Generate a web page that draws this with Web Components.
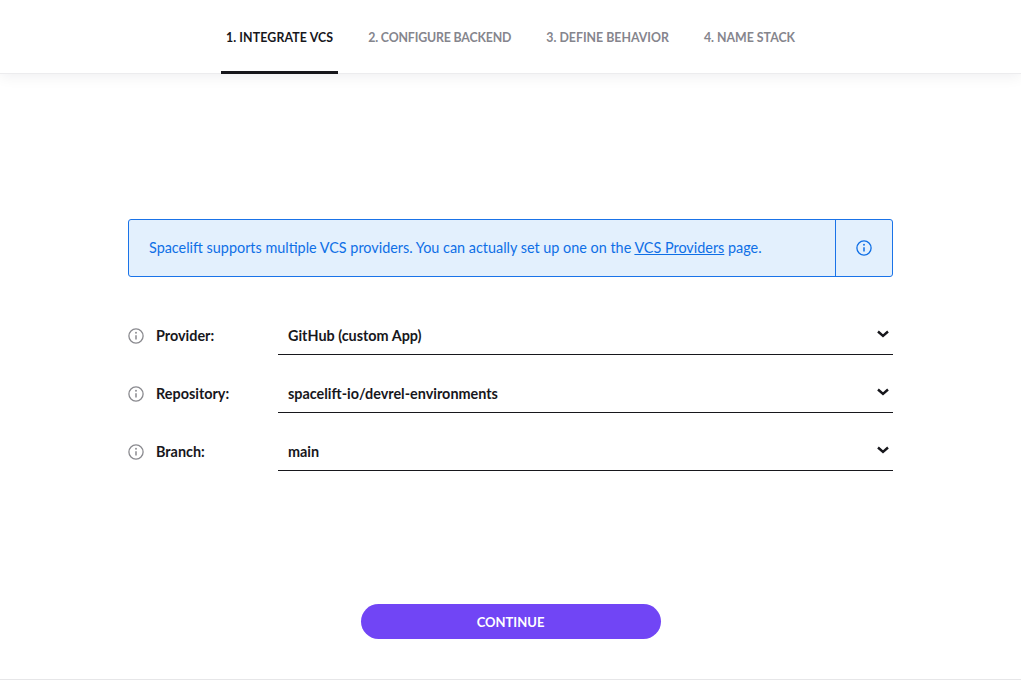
<!DOCTYPE html>
<html lang="en">
<head>
<meta charset="utf-8">
<title>Integrate VCS</title>
<style>
  html, body { margin: 0; height: 100%; background: #fff; }
  body { font-family: Lato, "Open Sans", sans-serif; overflow: hidden; }
</style>
</head>
<body>
<stack-wizard>
  <wizard-steps slot="steps">
    <wizard-step active style="letter-spacing:.12px">1. INTEGRATE VCS</wizard-step>
    <wizard-step style="letter-spacing:-.16px">2. CONFIGURE BACKEND</wizard-step>
    <wizard-step>3. DEFINE BEHAVIOR</wizard-step>
    <wizard-step>4. NAME STACK</wizard-step>
  </wizard-steps>
  <info-banner slot="banner">Spacelift supports multiple VCS providers. You can actually set up one on the <a href="#" style="color:inherit">VCS Providers</a> page.</info-banner>
  <form-row label="Provider:">GitHub (custom App)</form-row>
  <form-row label="Repository:">spacelift-io/devrel-environments</form-row>
  <form-row label="Branch:">main</form-row>
  <primary-button slot="actions">CONTINUE</primary-button>
</stack-wizard>

<script>
const infoIcon = `<svg viewBox="0 0 16 16" width="16" height="16" fill="none" stroke="currentColor" aria-hidden="true">
  <circle cx="8" cy="8" r="7.1" stroke-width="1.3"/>
  <path d="M8 7.2v4.3" stroke-width="1.5"/>
  <circle cx="8" cy="4.8" r=".95" fill="currentColor" stroke="none"/>
</svg>`;

class StackWizard extends HTMLElement {
  constructor() {
    super();
    this.attachShadow({ mode: 'open' }).innerHTML = `
      <style>
        :host { display: flex; flex-direction: column; height: 680px; box-sizing: border-box; border-bottom: 1px solid #e6e6e8; }
        header { height: 74px; flex: none; box-sizing: border-box; background: #fff; border-bottom: 1px solid #ececee; box-shadow: 0 2px 14px rgba(20, 20, 40, .07); }
        main { flex: 1; display: flex; flex-direction: column; padding: 145px 128px 0; }
        .fields { display: flex; flex-direction: column; gap: 8px; margin-top: 28px; }
        footer { display: flex; justify-content: center; padding-bottom: 40px; }
      </style>
      <header><slot name="steps"></slot></header>
      <main>
        <slot name="banner"></slot>
        <div class="fields"><slot></slot></div>
      </main>
      <footer><slot name="actions"></slot></footer>`;
  }
}

class WizardSteps extends HTMLElement {
  constructor() {
    super();
    this.attachShadow({ mode: 'open' }).innerHTML = `
      <style>
        :host { display: flex; justify-content: center; gap: 25px; height: 74px; }
      </style>
      <slot></slot>`;
  }
}

class WizardStep extends HTMLElement {
  constructor() {
    super();
    this.attachShadow({ mode: 'open' }).innerHTML = `
      <style>
        :host { display: flex; box-sizing: border-box; height: 74px; padding: 3px 5px 0; align-items: center;
          font-size: 12.35px; font-weight: 700; color: #85858d; border-bottom: 3px solid transparent; white-space: nowrap; }
        :host([active]) { color: #17171c; border-bottom-color: #17171c; }
      </style>
      <slot></slot>`;
  }
}

class InfoBanner extends HTMLElement {
  constructor() {
    super();
    this.attachShadow({ mode: 'open' }).innerHTML = `
      <style>
        :host { display: flex; height: 58px; box-sizing: border-box; border: 1px solid #1a73e8; border-radius: 3px;
          background: #e3f0fd; color: #0f6fe6; font-size: 14.4px; }
        .text { flex: 1; display: flex; align-items: center; padding: 0 0 2px 20px; white-space: pre-wrap; }
        .icon { flex: none; box-sizing: border-box; width: 57px; border-left: 1px solid #1a73e8; display: flex; align-items: center; justify-content: center; }
      </style>
      <div class="text"><span><slot></slot></span></div>
      <div class="icon">${infoIcon}</div>`;
  }
}

class FormRow extends HTMLElement {
  constructor() {
    super();
    this.attachShadow({ mode: 'open' }).innerHTML = `
      <style>
        :host { display: flex; height: 50px; align-items: stretch; color: #17171c; font-size: 14.4px; font-weight: 700; }
        .label { flex: none; width: 150px; display: flex; align-items: center; gap: 12px; padding-top: 11px; box-sizing: border-box; }
        .label svg { color: #8a8a8f; }
        .value { flex: 1; display: flex; align-items: center; justify-content: space-between; padding: 11px 4px 0 10px; border-bottom: 1px solid #17171c; }
        .chevron { display: block; margin-top: -3px; }
      </style>
      <div class="label">${infoIcon}<span class="name"></span></div>
      <div class="value"><span><slot></slot></span>
        <svg class="chevron" viewBox="0 0 12 8" width="12" height="8" fill="none" stroke="#17171c" stroke-width="2.4" aria-hidden="true"><path d="M1 1.5l5 4.5 5-4.5"/></svg>
      </div>`;
  }
  connectedCallback() {
    this.shadowRoot.querySelector('.name').textContent = this.getAttribute('label');
  }
}

class PrimaryButton extends HTMLElement {
  constructor() {
    super();
    this.attachShadow({ mode: 'open' }).innerHTML = `
      <style>
        :host { display: flex; width: 300px; height: 35px; align-items: center; justify-content: center; border-radius: 18px;
          background: #7145f5; color: #fff; font-size: 13px; font-weight: 700; }
      </style>
      <slot></slot>`;
  }
}

customElements.define('stack-wizard', StackWizard);
customElements.define('wizard-steps', WizardSteps);
customElements.define('wizard-step', WizardStep);
customElements.define('info-banner', InfoBanner);
customElements.define('form-row', FormRow);
customElements.define('primary-button', PrimaryButton);
</script>
</body>
</html>
